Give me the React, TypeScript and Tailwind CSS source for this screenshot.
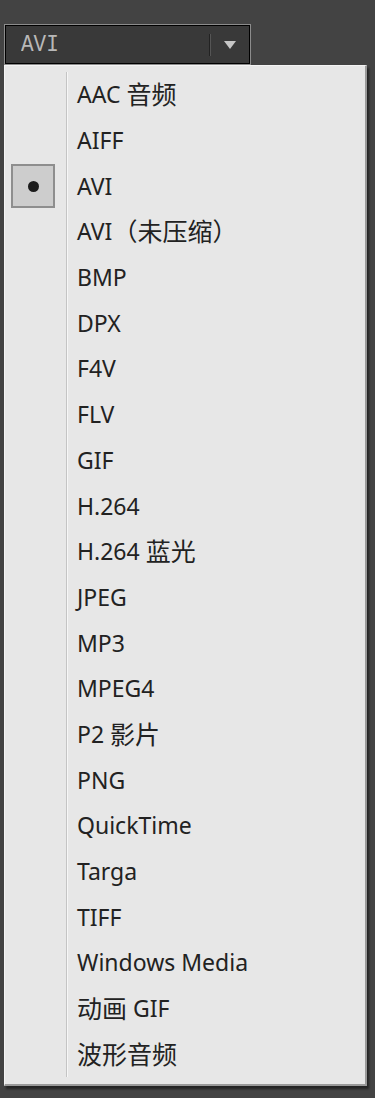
const formats = [
  "AAC 音频",
  "AIFF",
  "AVI",
  "AVI（未压缩）",
  "BMP",
  "DPX",
  "F4V",
  "FLV",
  "GIF",
  "H.264",
  "H.264 蓝光",
  "JPEG",
  "MP3",
  "MPEG4",
  "P2 影片",
  "PNG",
  "QuickTime",
  "Targa",
  "TIFF",
  "Windows Media",
  "动画 GIF",
  "波形音频",
]

const selected = "AVI"

// CJK glyphs in the original are set a little larger than the latin ones
function Label({ text }: { text: string }) {
  const parts = text.split(/([\u3000-\u9fff\uff00-\uffef]+)/).filter(Boolean)
  return (
    <>
      {parts.map((p, i) =>
        /[\u3000-\u9fff\uff00-\uffef]/.test(p) ? (
          <span key={i} className="text-[25px]">
            {p}
          </span>
        ) : (
          <span key={i}>{p}</span>
        )
      )}
    </>
  )
}

function FormatSelect() {
  return (
    <div className="ml-[4px] w-[247px] h-[41px] border border-[#8c8c8c] bg-black p-px">
      <div className="h-full bg-[#393939] flex items-center">
        <span className="pl-[15px] flex-1 text-[21px] leading-none text-[#b8b8b8] [font-family:'Liberation_Mono',monospace] scale-y-110">
          AVI
        </span>
        <div className="w-[2px] h-[22px] bg-[#222] border-r border-[#555]" />
        <div className="w-[38px] flex justify-center">
          <svg width="12" height="8" viewBox="0 0 12 8">
            <path d="M0 0 H12 L6 8 Z" fill="#c6c6c6" />
          </svg>
        </div>
      </div>
    </div>
  )
}

function FormatMenu() {
  return (
    <div className="ml-[4px] w-[363px] bg-[#e7e7e7] border-t border-l border-[#f4f4f4] border-r-2 border-b-2 border-r-[#9a9a9a] border-b-[#9a9a9a] shadow-[2px_3px_2px_rgba(0,0,0,0.45)]">
      <div className="flex pt-[6px] pb-[7px]">
        <div className="w-[61px] shrink-0">
          {formats.map((f) => (
            <div key={f} className="h-[45.7px] flex items-center pl-[6px]">
              {f === selected && (
                <div className="w-[44px] h-[44px] bg-[#cdcdcd] border-2 border-[#8e8e8e] flex items-center justify-center">
                  <div className="w-[11px] h-[11px] rounded-full bg-[#1c1c1c]" />
                </div>
              )}
            </div>
          ))}
        </div>
        <div className="w-[2px] shrink-0 bg-[#c4c4c4] border-r border-[#f6f6f6]" />
        <ul className="flex-1 pl-[9px]">
          {formats.map((f) => (
            <li
              key={f}
              className="h-[45.7px] flex items-center whitespace-pre text-[23px] leading-none text-[#222] [font-family:'Noto_Sans','Noto_Sans_CJK_SC',sans-serif]"
            >
              <Label text={f} />
            </li>
          ))}
        </ul>
      </div>
    </div>
  )
}

export default function App() {
  return (
    <div className="w-[375px] h-[1098px] bg-[#434343] overflow-hidden pt-[24px]">
      <FormatSelect />
      <FormatMenu />
    </div>
  )
}
